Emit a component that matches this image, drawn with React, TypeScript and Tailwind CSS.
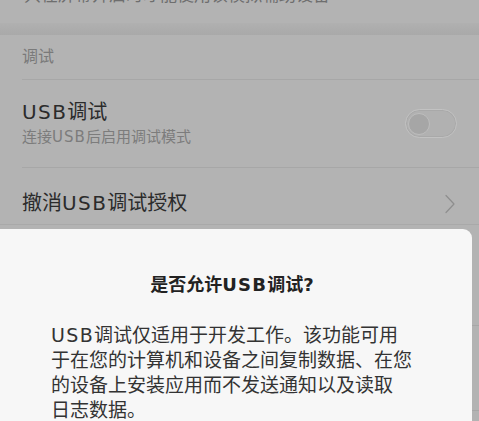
import React from "react";

const font = "font-['DejaVu_Sans','Noto_Sans_CJK_SC',sans-serif]";

function U() {
  return <span className="tracking-[0.07em]">USB</span>;
}

function Toggle() {
  return (
    <div className="w-[52px] h-[29px] rounded-full border border-[#c2c2c2] bg-[#b1b1b1] shadow-[inset_0_0_0_1px_#a9a9a9] flex items-center pl-[2px]">
      <div className="w-[22px] h-[22px] rounded-full bg-[#a6a6a6] border border-[#bdbdbd]" />
    </div>
  );
}

function Chevron() {
  return (
    <svg width="12" height="20" viewBox="0 0 12 20" fill="none">
      <polyline points="2,1.5 10,10 2,18.5" stroke="#8e8e8e" strokeWidth="1.2" strokeLinecap="round" strokeLinejoin="round" />
    </svg>
  );
}

export default function App() {
  return (
    <div className={`relative w-[479px] h-[421px] overflow-hidden bg-[#b3b3b3] ${font}`}>
      <div className="h-[23px] overflow-hidden pl-[24px]">
        <p className="text-[17px] leading-[20px] -mt-[15px] text-[#6e6e6e] whitespace-nowrap">
          只在屏幕开启时才能使用该模拟辅助设备
        </p>
      </div>
      <div className="h-[12px] bg-gradient-to-b from-[#b0b0b0] to-[#a9a9a9]" />
      <div className="h-[44px] flex items-center pl-[22px] text-[16px] text-[#7a7a7a]">调试</div>
      <div className="h-px bg-[#a7a7a7] ml-[22px]" />
      <div className="h-[87px] flex items-center justify-between pl-[22px] pr-[22px]">
        <div className="flex flex-col">
          <span className="text-[20px] leading-[25px] text-[#2b2b2b]"><U />调试</span>
          <span className="text-[15px] leading-[22px] text-[#7c7c7c] mt-[1px]">连接<U />后启用调试模式</span>
        </div>
        <Toggle />
      </div>
      <div className="h-px bg-[#a7a7a7] ml-[22px]" />
      <div className="h-[57px] flex items-center justify-between pl-[22px] pr-[23px] pt-[15px] border-b border-[#a9a9a9]">
        <span className="text-[20px] leading-[25px] text-[#2b2b2b]">撤消<U />调试授权</span>
        <Chevron />
      </div>
      <div className="h-[101px] border-b border-[#a7a7a7]" />
      <div className="h-[85px] border-b border-[#a7a7a7]" />

      <div className="absolute left-0 top-[229px] w-[472px] h-[200px] bg-[#f7f7f7] rounded-tr-[9px]">
        <div className="pt-[44px] pr-[8px] text-center text-[18px] leading-[24px] font-bold text-[#222222]">
          是否允许<U />调试?
        </div>
        <div className="mt-[26px] pl-[51px] text-[19px] leading-[25px] text-[#333333] whitespace-nowrap">
          <div><U />调试仅适用于开发工作。该功能可用</div>
          <div>于在您的计算机和设备之间复制数据、在您</div>
          <div>的设备上安装应用而不发送通知以及读取</div>
          <div>日志数据。</div>
        </div>
      </div>
    </div>
  );
}
